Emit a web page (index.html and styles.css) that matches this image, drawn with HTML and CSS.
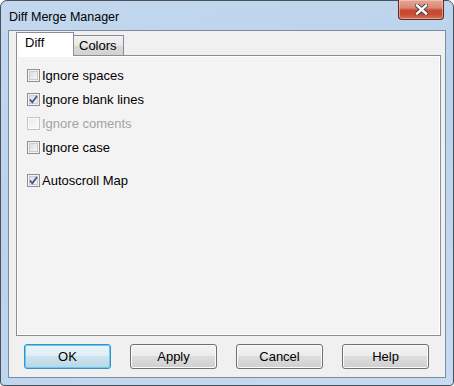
FILE: index.html
```html
<!DOCTYPE html>
<html>
<head>
<meta charset="utf-8">
<link rel="stylesheet" href="styles.css">
</head>
<body>
<div class="window">
  <div class="titlebar">
    <span class="title">Diff Merge Manager</span>
    <div class="close">
      <svg width="13" height="11" viewBox="0 0 13 11">
        <path d="M2 1.5 L11 9.5 M11 1.5 L2 9.5" stroke="#3b3b48" stroke-width="4.2" stroke-linecap="square" fill="none"/>
        <path d="M2 1.5 L11 9.5 M11 1.5 L2 9.5" stroke="#ffffff" stroke-width="2.4" stroke-linecap="square" fill="none"/>
      </svg>
    </div>
  </div>
  <div class="client">
    <div class="tabs">
      <div class="tab active">Diff</div>
      <div class="tab">Colors</div>
    </div>
    <div class="panel">
      <div class="row"><span class="cb"></span><span class="lbl">Ignore spaces</span></div>
      <div class="row"><span class="cb checked"><svg width="9" height="9" viewBox="0 0 9 9"><path d="M1 4.5 L3.3 7.3 L8 1" stroke="#3e5594" stroke-width="1.8" fill="none"/></svg></span><span class="lbl">Ignore blank lines</span></div>
      <div class="row disabled"><span class="cb"></span><span class="lbl">Ignore coments</span></div>
      <div class="row"><span class="cb"></span><span class="lbl">Ignore case</span></div>
      <div class="row extra"><span class="cb checked"><svg width="9" height="9" viewBox="0 0 9 9"><path d="M1 4.5 L3.3 7.3 L8 1" stroke="#3e5594" stroke-width="1.8" fill="none"/></svg></span><span class="lbl">Autoscroll Map</span></div>
    </div>
    <div class="buttons">
      <div class="btn default">OK</div>
      <div class="btn">Apply</div>
      <div class="btn">Cancel</div>
      <div class="btn">Help</div>
    </div>
  </div>
</div>
</body>
</html>
```
FILE: styles.css
```css
html, body {
  margin: 0;
  padding: 0;
  background: #ffffff;
}
body {
  width: 454px;
  height: 386px;
  font-family: "Liberation Sans", Arial, sans-serif;
  font-size: 13px;
  color: #000;
}
.window {
  box-sizing: border-box;
  width: 454px;
  height: 386px;
  border: 1px solid #4b5158;
  border-radius: 7px 7px 4px 4px;
  background: linear-gradient(160deg, #c3d8ee 0%, #bad2ec 45%, #c6dbf1 100%);
  display: flex;
  flex-direction: column;
}
.titlebar {
  height: 29px;
  flex: none;
  position: relative;
  display: flex;
  align-items: center;
  padding: 2px 0 0 8px;
  box-sizing: border-box;
}
.title {
  font-size: 12.5px;
  color: #000;
}
.close {
  position: absolute;
  top: -1px;
  right: 9px;
  width: 46px;
  height: 20px;
  box-sizing: border-box;
  border: 1px solid #5e2a22;
  border-top: none;
  border-radius: 0 0 4px 4px;
  background: linear-gradient(#e6a797 0%, #d98a75 40%, #c94a30 55%, #c84a2f 75%, #d5735c 100%);
  box-shadow: inset 0 0 0 1px rgba(255, 210, 200, 0.5);
  display: flex;
  align-items: center;
  justify-content: center;
}
.client {
  flex: 1;
  margin: 0 7px 7px 7px;
  border: 1px solid #7d8c9e;
  background: #f1f0f1;
  display: flex;
  flex-direction: column;
  padding: 1px 4px 8px 7px;
}
.tabs {
  display: flex;
  align-items: flex-end;
  height: 23px;
  flex: none;
}
.tab {
  box-sizing: border-box;
  border: 1px solid #8a8d95;
  border-bottom: none;
  height: 20px;
  line-height: 19px;
  padding: 0 6px 0 5px;
  background: linear-gradient(#f3f3f3, #e7e7e7 50%, #dadada 50%, #d2d2d2);
  margin-left: -1px;
}
.tab.active {
  height: 24px;
  line-height: 20px;
  width: 58px;
  margin-left: 0;
  margin-bottom: -1px;
  padding: 0 0 0 8px;
  background: #ffffff;
  position: relative;
  z-index: 1;
}
.panel {
  flex: 1;
  border: 1px solid #8a8d95;
  background: #f4f3f4;
  box-shadow: inset 1px 1px 0 #ffffff, inset -1px -1px 0 #ffffff;
  padding: 13px 10px 0 10px;
  display: flex;
  flex-direction: column;
  gap: 11px;
}
.row {
  display: flex;
  align-items: center;
  height: 13px;
}
.row.extra {
  margin-top: 9px;
}
.cb {
  box-sizing: border-box;
  width: 13px;
  height: 13px;
  border: 1px solid #8e8f8f;
  background: linear-gradient(135deg, #d6d7d9 0%, #f1f1f2 70%, #fbfbfb 100%);
  box-shadow: inset 0 0 0 1px #f4f4f4, inset 0 0 0 2px #c9cbcf;
  display: flex;
  align-items: center;
  justify-content: center;
  flex: none;
}
.lbl {
  margin-left: 2px;
  line-height: 15px;
}
.row.disabled .cb {
  border-color: #c6c6c6;
  background: linear-gradient(135deg, #eaeaea, #fbfbfb);
  box-shadow: inset 0 0 0 1px #fbfbfb;
}
.row.disabled .lbl {
  color: #a3a3a3;
}
.buttons {
  flex: none;
  display: flex;
  gap: 19px;
  padding-left: 8px;
  margin-top: 8px;
}
.btn {
  box-sizing: border-box;
  width: 87px;
  height: 25px;
  border: 1px solid #707070;
  border-radius: 3px;
  background: linear-gradient(#f2f2f2 0%, #ebebeb 50%, #dddddd 50%, #cfcfcf 100%);
  box-shadow: inset 0 0 0 1px #fbfbfb;
  display: flex;
  align-items: center;
  justify-content: center;
  line-height: 15px;
}
.btn.default {
  border-color: #3c8fc4;
  background: linear-gradient(#e9f3f8 0%, #e0eef6 50%, #cde3ee 50%, #bcd6e3 100%);
  box-shadow: inset 0 0 0 1px #5fd0f4;
}
```
